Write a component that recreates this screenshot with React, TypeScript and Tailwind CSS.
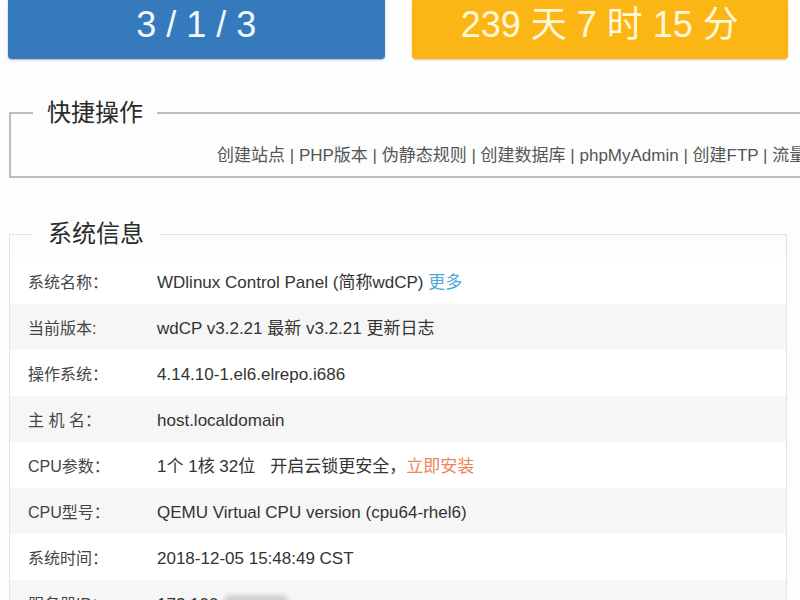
import React from "react";

const rows: { label: string; value: React.ReactNode }[] = [
  {
    label: "系统名称：",
    value: (
      <>
        WDlinux Control Panel (简称wdCP) <span className="text-[#4fa9d6]">更多</span>
      </>
    ),
  },
  { label: "当前版本:", value: "wdCP v3.2.21 最新 v3.2.21 更新日志" },
  { label: "操作系统：", value: "4.14.10-1.el6.elrepo.i686" },
  { label: "主 机 名：", value: "host.localdomain" },
  {
    label: "CPU参数：",
    value: (
      <>
        1个 1核 32位<span className="ml-[15px]">开启云锁更安全，</span>
        <span className="text-[#ee8457]">立即安装</span>
      </>
    ),
  },
  { label: "CPU型号：", value: "QEMU Virtual CPU version (cpu64-rhel6)" },
  { label: "系统时间：", value: "2018-12-05 15:48:49 CST" },
  {
    label: "服务器IP：",
    value: (
      <>
        172.100
        <span className="ml-[6px] inline-block h-[20px] w-[64px] rounded-[6px] bg-[#cfcfcf] align-middle blur-[2px]" />
      </>
    ),
  },
];

const links = ["创建站点", "PHP版本", "伪静态规则", "创建数据库", "phpMyAdmin", "创建FTP", "流量监控"];

export default function App() {
  return (
    <div className="h-[600px] w-[800px] overflow-hidden bg-[#fdfdfd] font-['Liberation_Sans','Noto_Sans_CJK_SC',sans-serif] text-[#333]">
      <div className="grid grid-cols-2 gap-[27px] pl-[8px] pr-[12px]">
        <div className="h-[59px] rounded-b-[4px] bg-[#347abd] pt-[7px] text-center text-[36px] leading-none text-[#f3f7fc] shadow-[0_1px_2px_rgba(0,0,0,0.3)]">
          3 / 1 / 3
        </div>
        <div className="h-[59px] rounded-b-[4px] bg-[#fbb616] pt-[7px] text-center text-[36px] leading-none text-[#fff8d8] shadow-[0_1px_2px_rgba(0,0,0,0.2)]">
          239 天 7 时 15 分
        </div>
      </div>

      <fieldset className="ml-[9px] mt-[38px] w-[900px] border-2 border-[#bcbcbc]">
        <legend className="ml-[22px] px-[14px] text-[24px] leading-[32px] text-[#2a2a2a]">快捷操作</legend>
        <div className="whitespace-nowrap pb-[8px] pl-[206px] pt-[15px] text-[17px] leading-[24px] text-[#555]">
          {links.map((l, i) => (
            <React.Fragment key={l}>
              {i > 0 && " | "}
              <span>{l}</span>
            </React.Fragment>
          ))}
        </div>
      </fieldset>

      <fieldset className="ml-[9px] mt-[40px] w-[778px] border border-[#e4e4e4]">
        <legend className="ml-[23px] px-[15px] text-[24px] leading-[32px] text-[#2a2a2a]">系统信息</legend>
        <div className="pt-[8px]">
          {rows.map((r, i) => (
            <div
              key={r.label}
              className={`flex h-[46px] items-center pl-[18px] pt-[3px] ${i % 2 === 1 ? "bg-[#f6f6f6]" : "bg-white"}`}
            >
              <div className="w-[129px] whitespace-nowrap text-[16px] text-[#444]">{r.label}</div>
              <div className="whitespace-nowrap text-[17px] text-[#333]">{r.value}</div>
            </div>
          ))}
        </div>
      </fieldset>
    </div>
  );
}
